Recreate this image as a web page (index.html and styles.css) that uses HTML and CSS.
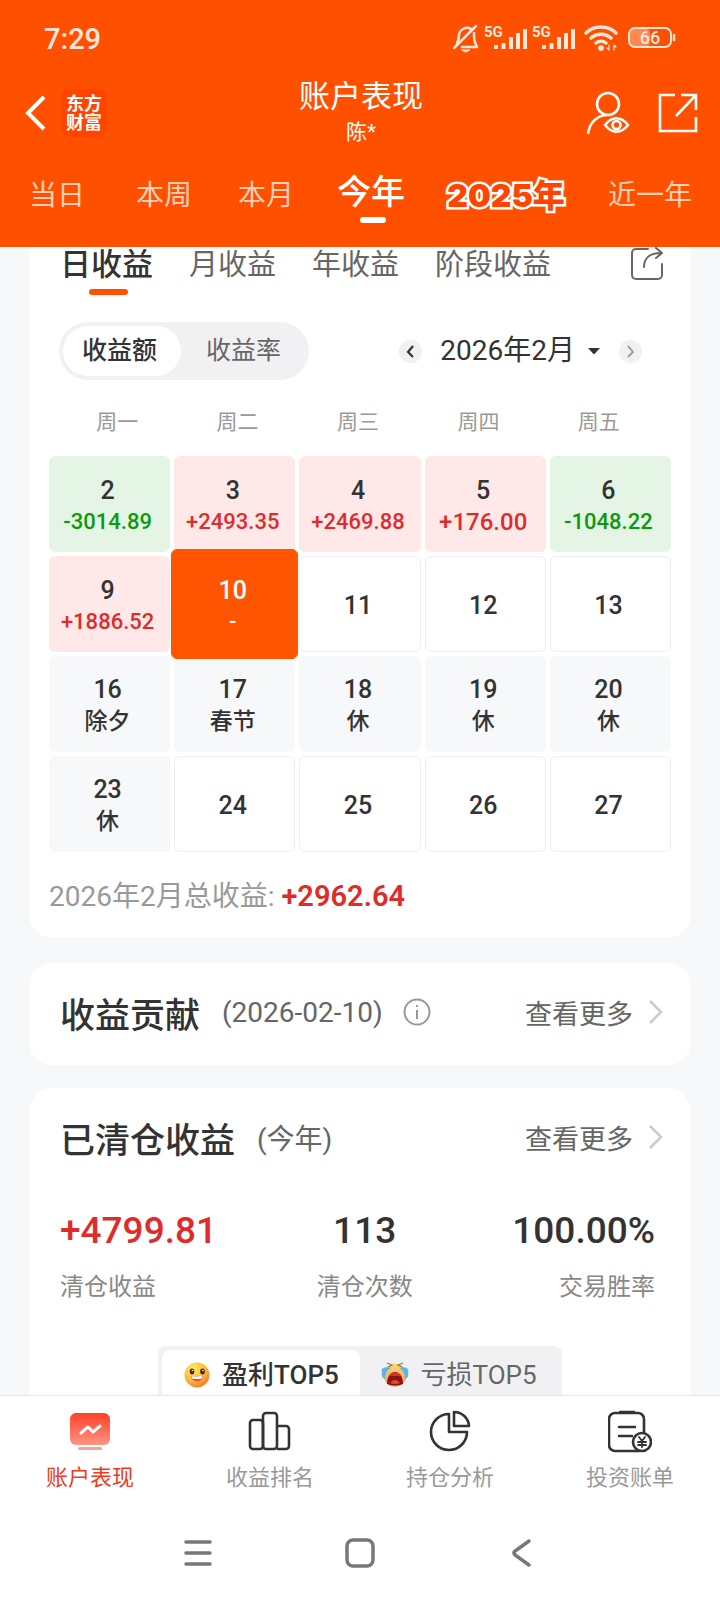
FILE: index.html
```html
<!DOCTYPE html>
<html lang="zh-CN">
<head>
<meta charset="utf-8">
<meta name="viewport" content="width=device-width, initial-scale=1">
<title>账户表现</title>
<link rel="stylesheet" href="styles.css">
</head>
<body>
<div class="app">
  <header class="header">
    <div class="status">
      <span class="clock">7:29</span>
      <svg class="status-icons" width="224" height="32" viewBox="0 0 224 32" fill="none" stroke="#ffe6da" stroke-linecap="round" stroke-linejoin="round">
        <path d="M5 20c1-2 2-4 2-8a8 8 0 0 1 12-6M22 10c0 6 0 8 3 14H10M2 25L24 3" stroke-width="2.500"/>
        <path d="M10 27h8l-4 2z" fill="#ffe6da" stroke-width="1"/>
        <text x="32" y="14" class="net">5G</text>
        <path d="M44 26v-4M51.500 26v-6M59 26V14M66 26V10M73 26V6" stroke-width="4" stroke-linecap="butt"/>
        <text x="80" y="14" class="net">5G</text>
        <path d="M92 26v-4M99.500 26v-6M107 26V14M114 26V10M121 26V6" stroke-width="4" stroke-linecap="butt"/>
        <path d="M134 10a22 22 0 0 1 30 0M139 15a15 15 0 0 1 20 0M144 20a8 8 0 0 1 10 0" stroke-width="3.500"/>
        <circle cx="149" cy="25" r="2.500" fill="#ffe6da" stroke-width="1"/>
        <path d="M157 22v5l-2-2M162 27v-5l2 2" stroke-width="1.200"/>
        <rect x="178" y="5" width="20" height="19" rx="5" fill="#ff8850" stroke="none"/>
        <rect x="177" y="5" width="42" height="19" rx="6" stroke-width="2"/>
        <path d="M222 12v5" stroke-width="2.500"/>
        <text x="198" y="21" class="battery" text-anchor="middle">66</text>
      </svg>
    </div>
    <div class="titlebar">
      <div class="side">
        <button class="icon-btn" aria-label="返回"><svg width="24" height="38" viewBox="0 0 24 38" fill="none" stroke="#fff" stroke-width="4"><path d="M20 3L4 19l16 16"/></svg></button>
        <span class="logo">东方<br>财富</span>
      </div>
      <div class="heading"><h1>账户表现</h1><p>陈*</p></div>
      <div class="side side-end">
        <button class="icon-btn" aria-label="查看账户"><svg width="44" height="44" viewBox="0 0 44 44" fill="none" stroke="#fff" stroke-width="2.600"><circle cx="22" cy="13" r="11"/><path d="M2 43c1-10 8-18 18-19"/><path d="M19 34c7-9 16-9 23 0-7 9-16 9-23 0z"/><circle cx="30.500" cy="34" r="4"/></svg></button>
        <button class="icon-btn" aria-label="分享"><svg width="40" height="40" viewBox="0 0 40 40" fill="none" stroke="#fff" stroke-width="2.600"><path d="M17 2H2v36h36V24M23 2h15v15M18 23L37 3"/></svg></button>
      </div>
    </div>
    <nav class="periods">
      <button>当日</button><button>本周</button><button>本月</button><button class="on">今年</button><button class="year">2025年</button><button>近一年</button>
    </nav>
  </header>

  <main class="content">
    <section class="card card-calendar">
      <div class="kinds">
        <button class="on">日收益</button><button>月收益</button><button>年收益</button><button>阶段收益</button>
        <button class="share" aria-label="分享收益"><svg width="34" height="34" viewBox="0 0 34 34" fill="none" stroke="#666" stroke-width="2" stroke-linecap="round" stroke-linejoin="round"><path d="M18 2H6a4 4 0 0 0-4 4v22a4 4 0 0 0 4 4h22a4 4 0 0 0 4-4V17M14 20c0-8 5-14 17-14M26 1l6 5-6 5"/></svg></button>
      </div>
      <div class="controls">
        <div class="switch"><button class="on">收益额</button><button>收益率</button></div>
        <div class="month">
          <button class="step" aria-label="上个月"><svg width="23" height="23" viewBox="0 0 23 23" fill="none" stroke="#333" stroke-width="2.200"><path d="M14 6l-5 6 5 5"/></svg></button>
          <button class="pick">2026年2月<svg width="14" height="8" viewBox="0 0 14 8"><path d="M1 1h12L8 6.500q-1 1-2 0z" fill="#333"/></svg></button>
          <button class="step" aria-label="下个月"><svg width="23" height="23" viewBox="0 0 23 23" fill="none" stroke="#999" stroke-width="1.800"><path d="M9 6l5 6-5 5"/></svg></button>
        </div>
      </div>
      <div class="weekdays"><span>周一</span><span>周二</span><span>周三</span><span>周四</span><span>周五</span></div>
      <div class="days">
        <button class="day down">2<span>-3014.89</span></button>
        <button class="day up">3<span>+2493.35</span></button>
        <button class="day up">4<span>+2469.88</span></button>
        <button class="day up short">5<span>+176.00</span></button>
        <button class="day down">6<span>-1048.22</span></button>
        <button class="day up">9<span>+1886.52</span></button>
        <button class="day today">10<span>-</span></button>
        <button class="day">11</button>
        <button class="day">12</button>
        <button class="day">13</button>
        <button class="day rest">16<span>除夕</span></button>
        <button class="day rest">17<span>春节</span></button>
        <button class="day rest">18<span>休</span></button>
        <button class="day rest">19<span>休</span></button>
        <button class="day rest">20<span>休</span></button>
        <button class="day rest">23<span>休</span></button>
        <button class="day">24</button>
        <button class="day">25</button>
        <button class="day">26</button>
        <button class="day">27</button>
      </div>
      <p class="total">2026年2月总收益: <strong>+2962.64</strong></p>
    </section>

    <section class="card card-row">
      <div class="card-head">
        <h2>收益贡献</h2><span class="note">(2026-02-10)</span>
        <button class="icon-btn info" aria-label="说明"><svg width="28" height="28" viewBox="0 0 28 28" fill="none" stroke="#999" stroke-width="2"><circle cx="14" cy="14" r="12.500"/><path d="M14 12v9M14 7v2"/></svg></button>
        <a class="more" href="#">查看更多<svg width="14" height="24" viewBox="0 0 14 24" fill="none" stroke="#ccc" stroke-width="2.600"><path d="M1 1l11 11L1 23"/></svg></a>
      </div>
    </section>

    <section class="card card-closed">
      <div class="card-head">
        <h2>已清仓收益</h2><span class="note">(今年)</span>
        <a class="more" href="#">查看更多<svg width="14" height="24" viewBox="0 0 14 24" fill="none" stroke="#ccc" stroke-width="2.600"><path d="M1 1l11 11L1 23"/></svg></a>
      </div>
      <dl class="stats">
        <div><dt>清仓收益</dt><dd class="gain">+4799.81</dd></div>
        <div><dt>清仓次数</dt><dd>113</dd></div>
        <div><dt>交易胜率</dt><dd>100.00%</dd></div>
      </dl>
      <div class="tops">
        <button class="on">
          <svg width="28" height="28" viewBox="0 0 28 28"><defs><radialGradient id="smile" cx=".35" cy=".25" r=".8"><stop offset="0" stop-color="#ffe85c"/><stop offset=".6" stop-color="#fdb93b"/><stop offset="1" stop-color="#f07a2c"/></radialGradient></defs><circle cx="14" cy="14" r="12.500" fill="url(#smile)"/><ellipse cx="9" cy="10.500" rx="2.300" ry="3" fill="#4a2a1c"/><ellipse cx="19.500" cy="10.500" rx="2.300" ry="3" fill="#4a2a1c"/><circle cx="9.500" cy="9.500" r=".8" fill="#fff"/><circle cx="20" cy="9.500" r=".8" fill="#fff"/><path d="M8 15q6 1.500 12-.5c0 7-11 8-12 .5z" fill="#e4452e"/><path d="M8.500 15q5.500 1.500 11-.5l-.5 3q-5 1.500-10 0z" fill="#fff"/></svg>盈利TOP5</button>
        <button>
          <svg width="28" height="28" viewBox="0 0 28 28"><defs><linearGradient id="cry" x2="0" y2="1"><stop offset="0" stop-color="#ffd873"/><stop offset="1" stop-color="#f79a4c"/></linearGradient></defs><circle cx="14" cy="14" r="11.500" fill="url(#cry)"/><path d="M6 2l5 2-4 2M22 2l-5 2 4 2" fill="none" stroke="#9a7a50" stroke-width="1.300"/><path d="M10 7C4 5-1 8 1 11c-1 3 0 6 3 7 0-6 2-9 6-11zM18 7c6-2 11 1 9 4 1 3 0 6-3 7 0-6-2-9-6-11z" fill="#5ab4f0"/><path d="M6 23c0-16 16-16 16 0q-8 3-16 0z" fill="#8e1414"/><path d="M8 14q6-5 12 0l-1 1H9z" fill="#d9302a"/><path d="M9 22q5-6 10 0-5 2-10 0z" fill="#e0483c"/></svg>亏损TOP5</button>
      </div>
    </section>
  </main>

  <nav class="tabbar">
    <a class="on" href="#"><svg width="44" height="44" viewBox="0 0 44 44"><defs><linearGradient id="acct" x2="0" y2="1"><stop offset="0" stop-color="#ff4029"/><stop offset="1" stop-color="#ff9484"/></linearGradient></defs><rect x="2" y="3" width="40" height="32" rx="6" fill="url(#acct)"/><path d="M13 23l7-6 5 5 7-6" fill="none" stroke="#fff" stroke-width="3" stroke-linecap="round" stroke-linejoin="round"/><rect x="10" y="37" width="24" height="3" rx="1.500" fill="#f3a397"/></svg>账户表现</a>
    <a href="#"><svg width="44" height="44" viewBox="0 0 44 44" fill="none" stroke="#333" stroke-width="2.600"><rect x="2" y="10" width="13" height="29" rx="3"/><rect x="15" y="3" width="14" height="36" rx="3"/><path d="M29 16h9a3 3 0 0 1 3 3v17a3 3 0 0 1-3 3h-9"/></svg>收益排名</a>
    <a href="#"><svg width="44" height="44" viewBox="0 0 44 44" fill="none" stroke="#333" stroke-width="2.600" stroke-linejoin="round"><path d="M21 4a18 18 0 1 0 18 18H21zM26 2v14h15A15 15 0 0 0 26 2z"/></svg>持仓分析</a>
    <a href="#"><svg width="44" height="44" viewBox="0 0 44 44" fill="none" stroke="#333" stroke-width="2.600" stroke-linecap="round"><path d="M36 22V9a6 6 0 0 0-6-6H7a6 6 0 0 0-6 6v26a6 6 0 0 0 6 6h24M12 2h14M11 17h16M11 26h13"/><circle cx="34" cy="32" r="9"/><path d="M31 27l3 4 3-4M34 31v6M30 32h8M30 35h8" stroke-width="1.800"/></svg>投资账单</a>
  </nav>
  <footer class="sysbar">
    <button aria-label="最近任务"><svg width="30" height="30" viewBox="0 0 30 30" fill="none" stroke="#777" stroke-width="3.500" stroke-linecap="round"><path d="M3 4h24M3 15h24M3 26h24"/></svg></button>
    <button aria-label="主屏幕"><svg width="30" height="30" viewBox="0 0 30 30" fill="none" stroke="#777" stroke-width="3.500"><rect x="2" y="2" width="26" height="26" rx="6"/></svg></button>
    <button aria-label="返回上一页"><svg width="30" height="30" viewBox="0 0 30 30" fill="none" stroke="#777" stroke-width="3.500" stroke-linecap="round"><path d="M22 3L8 13q-2 2 0 4l14 10"/></svg></button>
  </footer>
</div>
</body>
</html>
```

FILE: styles.css
```css
* { box-sizing: border-box; }
body, h1, h2, p, dl, dd { margin: 0; }
body {
  font-family: Roboto, "Noto Sans CJK SC", sans-serif;
  color: #333;
  background: #f7f8fa;
}
button {
  font: inherit;
  color: inherit;
  background: none;
  border: 0;
  padding: 0;
  white-space: nowrap;
}
a { color: inherit; text-decoration: none; }
svg { display: block; flex: none; }

.app { display: flex; flex-direction: column; height: 100vh; }

/* header */
.header { flex: none; background: #ff5000; color: #fff; }
.status {
  display: flex;
  align-items: center;
  justify-content: space-between;
  height: 78px;
  padding: 0 44px;
}
.clock { font-size: 29px; font-weight: 500; color: #ffe6da; }
.net { font-size: 15px; font-weight: 700; fill: #ffe6da; stroke: none; }
.battery { font-size: 18px; font-weight: 500; fill: #ffe6da; stroke: none; }
.titlebar {
  display: grid;
  grid-template-columns: 1fr auto 1fr;
  align-items: center;
  height: 70px;
  padding: 0 22px 0 24px;
}
.side { display: flex; align-items: center; gap: 13px; }
.side-end { justify-content: flex-end; gap: 28px; }
.logo {
  padding: 5px;
  border-radius: 9px;
  background: #ff4400;
  font-size: 18px;
  line-height: 19px;
  font-weight: 700;
}
.heading { text-align: center; }
h1 { font-size: 31px; line-height: 38px; font-weight: 400; }
.heading p { font-size: 21px; line-height: 32px; }
.periods {
  display: grid;
  grid-template-columns: 114fr 100fr 104fr 106fr 164fr 124fr;
  height: 99px;
  padding: 0 8px 9px 0;
  font-size: 28px;
  color: #ffd0b8;
}
.periods .on {
  position: relative;
  padding-bottom: 8px;
  font-size: 34px;
  font-weight: 500;
  color: #fff;
}
.periods .on::after {
  content: "";
  position: absolute;
  left: 50%;
  bottom: 15px;
  width: 26px;
  height: 6px;
  margin-left: -11px;
  border-radius: 3px;
  background: #fff;
}
.periods .year {
  font-family: Inter, "Noto Sans CJK SC", sans-serif;
  font-size: 32px;
  font-weight: 900;
  color: #ff4400;
  -webkit-text-stroke: 5px #fff;
  paint-order: stroke fill;
}

/* cards */
.content {
  flex: 1;
  min-height: 0;
  overflow: hidden;
  padding: 0 29px;
}
.card { background: #fff; border-radius: 24px; }
.card-calendar { padding: 0 20px 21px; border-radius: 0 0 24px 24px; }
.kinds {
  display: flex;
  gap: 36px;
  height: 48px;
  padding: 0 7px 0 11px;
  font-size: 29px;
  line-height: 36px;
  color: #666;
}
.kinds button { align-self: flex-start; }
.kinds .on { position: relative; font-size: 31px; font-weight: 500; color: #333; }
.kinds .on::after {
  content: "";
  position: absolute;
  left: 50%;
  top: 42px;
  width: 39px;
  height: 6px;
  margin-left: -18px;
  border-radius: 3px;
  background: #ff5000;
}
.kinds .share { margin-left: auto; }
.controls {
  display: flex;
  justify-content: space-between;
  align-items: center;
  margin-top: 27px;
  padding: 0 29px 0 10px;
}
.switch {
  display: flex;
  padding: 4px;
  border-radius: 29px;
  background: #f1f1f4;
  font-size: 25px;
  line-height: 50px;
  color: #666;
}
.switch button { padding: 0 24px 0 19px; border-radius: 25px; }
.switch button + button { margin-left: 6px; }
.switch .on { background: #fff; font-weight: 500; color: #333; }
.month { display: flex; align-items: center; gap: 18px; font-size: 28px; line-height: 36px; }
.step { border-radius: 50%; background: #f1f1f4; }
.pick { display: flex; align-items: center; gap: 12px; }
.weekdays {
  display: grid;
  grid-template-columns: repeat(5, 1fr);
  margin: 25px 12px 17px 8px;
  font-size: 21px;
  line-height: 34px;
  text-align: center;
  color: #999;
}
.days { display: grid; grid-template-columns: repeat(5, 1fr); gap: 4px; }
.day {
  display: flex;
  flex-direction: column;
  align-items: center;
  justify-content: center;
  min-width: 0;
  height: 96px;
  padding: 4px 4px 0 0;
  border: 1px solid #eee;
  border-radius: 6px;
  font-size: 25px;
  line-height: 32px;
  font-weight: 500;
}
.day span { font-size: 22px; line-height: 30px; }
.day.up { background: #fee9e8; border-color: #fee9e8; }
.day.up span { color: #e02b2b; }
.day.short span { font-size: 24px; }
.day.down { background: #e4f5e6; border-color: #e4f5e6; }
.day.down span { color: #0c9a0c; }
.day.rest { background: #f7f8fa; border-color: #f7f8fa; }
.day.rest span { font-size: 23px; line-height: 32px; }
.day.today {
  z-index: 1;
  height: 110px;
  margin: -7px -3px;
  border-color: #ff5500;
  background: #ff5500;
  color: #fff;
}
.total { margin-top: 24px; font-size: 28px; line-height: 40px; color: #999; }
.total strong { font-size: 29px; font-weight: 600; color: #e02b2b; }
.card-row { margin-top: 25px; }
.card-closed { margin-top: 23px; padding-bottom: 60px; }
.card-head { display: flex; align-items: center; height: 102px; padding: 0 28px 4px 31px; }
h2 { font-size: 35px; font-weight: 500; }
.note { margin-left: 22px; font-size: 28px; color: #666; }
.info { margin-left: 20px; }
.more {
  display: flex;
  align-items: center;
  gap: 16px;
  margin-left: auto;
  font-size: 27px;
  color: #666;
}
.stats {
  display: flex;
  justify-content: space-between;
  padding: 16px 36px 0 31px;
  text-align: center;
}
.stats div { display: flex; flex-direction: column-reverse; }
.stats div:first-child { text-align: left; }
.stats div:last-child { text-align: right; }
.stats dd { font-size: 37px; line-height: 50px; font-weight: 500; }
.stats .gain { color: #e02b2b; }
.stats dt { margin-top: 13px; font-size: 24px; line-height: 36px; color: #888; }
.tops {
  display: flex;
  width: 404px;
  max-width: 100%;
  margin: 41px auto 0;
  padding: 4px;
  border-radius: 8px;
  background: #f1f1f4;
  font-size: 26px;
  line-height: 50px;
  color: #666;
}
.tops button { display: flex; flex: 1; align-items: center; justify-content: center; gap: 11px; border-radius: 8px; }
.tops .on { background: #fff; font-weight: 500; color: #333; }

/* bottom bars */
.tabbar {
  display: grid;
  grid-template-columns: repeat(4, 1fr);
  flex: none;
  padding: 14px 0 0;
  border-top: 1px solid #e8e8ea;
  background: #fff;
  font-size: 22px;
  line-height: 32px;
  color: #999;
}
.tabbar a { display: flex; flex-direction: column; align-items: center; gap: 8px; }
.tabbar .on { color: #f03a20; }
.sysbar {
  display: flex;
  flex: none;
  justify-content: center;
  gap: 132px;
  height: 106px;
  padding-top: 44px;
  background: #fff;
}
.sysbar button { align-self: flex-start; }
```
